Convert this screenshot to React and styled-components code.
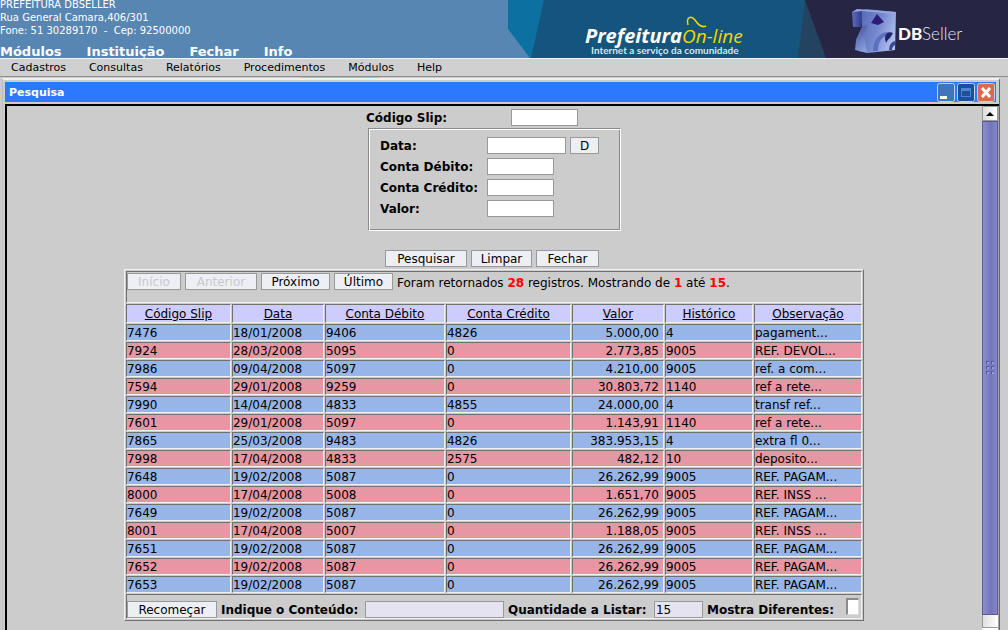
import React from "react";
import styled, { createGlobalStyle, css } from "styled-components";

const Global = createGlobalStyle`
  * { box-sizing: border-box; }
  body {
    margin: 0;
    background: #cccccc;
    color: #000;
    font: 12px/16px "DejaVu Sans", sans-serif;
  }
  button, input { font: inherit; color: inherit; margin: 0; border-radius: 0; }
`;

const Page = styled.div`
  height: 100vh;
  display: flex;
  flex-direction: column;
  overflow: hidden;
`;

const Header = styled.header`
  flex: none;
  height: 58px;
  display: flex;
  justify-content: space-between;
  background: #5786b2;
  color: #fff;
  overflow: hidden;
`;

const Identity = styled.div`
  display: flex;
  flex-direction: column;
  justify-content: space-between;
`;

const Address = styled.address`
  font: normal 10px/13px "DejaVu Sans", sans-serif;
  white-space: pre;
  margin-top: -2px;
`;

const MainNav = styled.nav`
  display: flex;
  gap: 25px;
  height: 14px;
  font-size: 13px;
  font-weight: bold;
  line-height: 16px;
  a { color: #fff; text-decoration: none; }
`;

const Banner = styled.svg`
  flex: none;
  width: 500px;
  height: 58px;
`;

const MenuBar = styled.nav`
  flex: none;
  position: relative;
  display: flex;
  gap: 23px;
  height: 19px;
  padding: 0 11px;
  font-size: 11px;
  line-height: 17px;
  background: #d0d0d0;
  border-top: 1px solid #f4f4f4;
  border-bottom: 1px solid #8e8e8e;
  a { color: #000; text-decoration: none; }
  &::after {
    content: "";
    position: absolute;
    left: 301px;
    bottom: -2px;
    width: 79px;
    height: 1px;
    background: #d9b27c;
  }
`;

const Window = styled.section`
  flex: 1;
  min-height: 0;
  margin: 1px 8px 0 2px;
  display: flex;
  flex-direction: column;
  border: 1px solid #666;
  border-top: 2px solid #f0f0f0;
  border-left-color: #c0c0c0;
  border-bottom: 0;
`;

const TitleBar = styled.div`
  flex: none;
  height: 20px;
  margin: 2px 3px 2px 2px;
  padding: 0 1px 0 4px;
  display: flex;
  align-items: center;
  gap: 1px;
  background: #2c79ff;
`;

const Title = styled.h1`
  flex: 1;
  margin: 0;
  padding-top: 2px;
  color: #fff;
  font-size: 11px;
  line-height: 18px;
`;

const WindowButton = styled.button`
  width: 19px;
  height: 19px;
  padding: 0;
  border: 0;
  background: none;
  svg { display: block; }
`;

const Frame = styled.div`
  flex: 1;
  min-height: 0;
  display: flex;
  margin: 0 0 0 2px;
  border-top: 2px solid #000;
  border-left: 2px solid #000;
`;

const Content = styled.main`
  flex: 1;
  min-width: 0;
  display: flex;
  flex-direction: column;
  align-items: center;
  padding-top: 3px;
  overflow: hidden;
`;

const ScrollBar = styled.div`
  flex: none;
  width: 17px;
  padding-right: 1px;
  background: #a4a4a4;
  display: flex;
  flex-direction: column;
`;

const ScrollArrow = styled.button`
  flex: none;
  height: 15px;
  padding: 0;
  border: 1px solid #999;
  background: linear-gradient(90deg, #dcdcdc, #fff);
  svg { display: block; margin: auto; }
`;

const ScrollThumb = styled.div`
  flex: 1;
  display: flex;
  align-items: center;
  justify-content: center;
  border: 1px solid #5c5c8c;
  background: linear-gradient(90deg, #8b8dd6, #7476b4 55%, #8386d0);
`;

const ScrollTrack = styled.div`
  flex: none;
  height: 12px;
  border-left: 1px solid #999;
  background: linear-gradient(90deg, #e0e0e0, #fff);
`;

const ScrollEnd = styled.div`
  flex: none;
  height: 3px;
  border-top: 1px solid #999;
  background: #fff;
`;

const Form = styled.form`
  display: flex;
  flex-direction: column;
  align-items: center;
`;

const Label = styled.label`
  padding-top: 2px;
  font-weight: bold;
  line-height: 15px;
  white-space: nowrap;
`;

const SlipRow = styled.div`
  width: 257px;
  display: grid;
  grid-template-columns: 145px auto;
  justify-content: start;
`;

const Field = styled.input`
  width: ${(p) => p.$width || 67}px;
  height: 17px;
  padding: 0 1px;
  border: 1px solid #999;
  background: ${(p) => (p.$tint ? "#e6e3f1" : "#fff")};
`;

const Button = styled.button`
  flex: none;
  width: ${(p) => p.$width}px;
  height: 17px;
  padding: 2px 0 0;
  border: 1px solid #999;
  background: #eeeff4;
  line-height: 13px;
  &:disabled { color: #c9c9cb; }
`;

const Criteria = styled.fieldset`
  width: 253px;
  height: 103px;
  margin: 2px 0 0;
  padding: 7px 10px;
  border: 1px solid #8a8a8a;
  border-right-color: #fff;
  border-bottom-color: #fff;
  box-shadow: inset 1px 1px #fff, inset -1px -1px #8a8a8a;
`;

const CriteriaGrid = styled.div`
  display: grid;
  grid-template-columns: 107px auto;
  justify-content: start;
  row-gap: 4px;
  padding: 1px;
`;

const Inline = styled.div`
  display: flex;
  gap: 4px;
`;

const Actions = styled(Inline)`
  margin: 19px 5px 2px 0;
`;

const sunken = css`
  border: 1px solid #707070;
  border-right-color: #f0f0f0;
  border-bottom-color: #f0f0f0;
`;

const Results = styled.table`
  width: 740px;
  margin-right: 1px;
  table-layout: fixed;
  border: 1px solid #f0f0f0;
  border-right-color: #707070;
  border-bottom-color: #707070;
  border-collapse: separate;
  border-spacing: 1px;
`;

const BarCell = styled.td`
  ${sunken}
  height: ${(p) => p.$height}px;
  padding: ${(p) => (p.$align === "top" ? 1 : 0)}px 0 0;
  vertical-align: ${(p) => p.$align};
  font-size: 12px;
  font-weight: normal;
`;

const Bar = styled(Inline)`
  align-items: ${(p) => p.$align};
  white-space: nowrap;
`;

const Summary = styled.span`
  line-height: 20px;
  strong { color: #f00; }
`;

const HeadCell = styled.th`
  ${sunken}
  height: 19px;
  padding: 2px 0 0;
  background: #ccccff;
  font-size: 12px;
  font-weight: normal;
  line-height: 15px;
  a { color: #000; }
`;

const Cell = styled.td`
  ${sunken}
  height: 17px;
  padding: 2px ${(p) => (p.$right ? 4 : 0)}px 0 0;
  font-size: 12px;
  line-height: 13px;
  text-align: ${(p) => (p.$right ? "right" : "left")};
  white-space: nowrap;
`;

const Row = styled.tr`
  ${Cell} { background: ${(p) => (p.$odd ? "#e796a4" : "#97b5e7")}; }
`;

const Pair = styled.div`
  display: grid;
  grid-template-columns: ${(p) => p.$label}px auto;
  align-items: end;
`;

const Check = styled.input`
  appearance: none;
  width: 13px;
  height: 17px;
  margin: 0 0 3px;
  background: #fff;
  border: 2px solid #8a8a8a;
  border-right: 1px solid #ddd;
  border-bottom: 1px solid #ddd;
`;

const columns = [
  ["Código Slip", 105],
  ["Data", 92],
  ["Conta Débito", 120],
  ["Conta Crédito", 125],
  ["Valor", 92],
  ["Histórico", 88],
  ["Observação", 108],
];

const rows = [
  ["7476", "18/01/2008", "9406", "4826", "5.000,00", "4", "pagament..."],
  ["7924", "28/03/2008", "5095", "0", "2.773,85", "9005", "REF. DEVOL..."],
  ["7986", "09/04/2008", "5097", "0", "4.210,00", "9005", "ref. a com..."],
  ["7594", "29/01/2008", "9259", "0", "30.803,72", "1140", "ref a rete..."],
  ["7990", "14/04/2008", "4833", "4855", "24.000,00", "4", "transf ref..."],
  ["7601", "29/01/2008", "5097", "0", "1.143,91", "1140", "ref a rete..."],
  ["7865", "25/03/2008", "9483", "4826", "383.953,15", "4", "extra fl 0..."],
  ["7998", "17/04/2008", "4833", "2575", "482,12", "10", "deposito..."],
  ["7648", "19/02/2008", "5087", "0", "26.262,99", "9005", "REF. PAGAM..."],
  ["8000", "17/04/2008", "5008", "0", "1.651,70", "9005", "REF. INSS ..."],
  ["7649", "19/02/2008", "5087", "0", "26.262,99", "9005", "REF. PAGAM..."],
  ["8001", "17/04/2008", "5007", "0", "1.188,05", "9005", "REF. INSS ..."],
  ["7651", "19/02/2008", "5087", "0", "26.262,99", "9005", "REF. PAGAM..."],
  ["7652", "19/02/2008", "5087", "0", "26.262,99", "9005", "REF. PAGAM..."],
  ["7653", "19/02/2008", "5087", "0", "26.262,99", "9005", "REF. PAGAM..."],
];

function BannerArt() {
  return (
    <Banner viewBox="0 0 500 58" role="img" aria-label="Prefeitura On-line, DBSeller">
      <defs>
        <linearGradient id="cube" x1="0" y1="0.3" x2="1" y2="0.7">
          <stop offset="0" stopColor="#5468b8" />
          <stop offset="0.5" stopColor="#7487cc" />
          <stop offset="1" stopColor="#b4c4f0" />
        </linearGradient>
        <linearGradient id="side" x1="0" x2="1">
          <stop offset="0" stopColor="#5f6cb8" />
          <stop offset="1" stopColor="#303c90" />
        </linearGradient>
        <linearGradient id="foot" x1="0" y1="0" x2="0.4" y2="1">
          <stop offset="0" stopColor="#3c4a9c" />
          <stop offset="1" stopColor="#8a9ddc" />
        </linearGradient>
      </defs>
      <path d="M0 0H500V58H22L0 29Z" fill="#0c70a1" />
      <path d="M36 0H500V58H23Z" fill="#14547d" />
      <path d="M297 0L290 58H330V0Z" fill="#244360" />
      <path d="M297 0H500V58H318Z" fill="#262543" />
      <g fontFamily="'Open Sans', sans-serif" fontStyle="italic">
        <text x="77" y="43" fontSize="20" fontWeight="bold" fill="#fff">Prefeitura</text>
        <text x="174" y="43" fontSize="19" fill="#f0d800">On-line</text>
      </g>
      <text x="83" y="54" fontSize="10" fontFamily="Lato, sans-serif" fontWeight="bold" fill="#d5e5f0">Internet a serviço da comunidade</text>
      <path d="M180 25C178 17 183 15 187 20C191 26 194 28 198 26" fill="none" stroke="#f0d800" strokeWidth="1.5" />
      <path d="M353 11L358 9L388 12L387 50L360 53L350 51L348 40L354 27Z" fill="url(#cube)" />
      <path d="M344 12L354 10L353 27L345 27Z" fill="url(#side)" />
      <path d="M354 27L360 25C356 33 356 44 360 53L347 50L348 40Z" fill="url(#foot)" />
      <path d="M344 12L349 9L388 12L386 14L354 11Z" fill="#97a6e0" />
      <path d="M369 14L376 22L370 25L363 23Z" fill="#2a1d78" />
      <path d="M365 51C365 41 371 32 380 32L378 36C372 38 370 44 370 51Z" fill="#5c6fc0" />
      <path d="M377 39C377 34 380 31 385 33L382 38C380 39 379 41 378 43Z" fill="#20256a" />
      <path d="M381 50C381 45 383 42 387 41V45C385 46 384 48 384 50Z" fill="#3c4c9c" />
      <text x="390" y="40" fontFamily="Lato, sans-serif" fontWeight="900" fontSize="17" fill="#fff">DB</text>
      <text x="414" y="40" fontFamily="Lato, sans-serif" fontWeight="300" fontSize="17" fill="#e4e4f0">Seller</text>
    </Banner>
  );
}

function WindowIcon({ kind }) {
  const fill = { min: "#3f76bb", max: "#1f4f9c", close: "#dc6a4e" }[kind];
  return (
    <svg width="19" height="19" viewBox="0 0 19 19" aria-hidden="true">
      <rect x="1.5" y="0.5" width="17" height="18" rx="2" fill={fill} stroke="#b9d0ee" />
      {kind === "min" && <rect x="4" y="13" width="7" height="3" fill="#fff" />}
      {kind === "max" && (
        <>
          <rect x="5.5" y="5.5" width="9" height="8" fill="none" stroke="#4f86d4" />
          <rect x="5" y="5" width="10" height="3" fill="#4f86d4" />
        </>
      )}
      {kind === "close" && <path d="M6 5L14 14M14 5L6 14" stroke="#fff" strokeWidth="3" />}
    </svg>
  );
}

function CriteriaField({ id, label, width, children }) {
  return (
    <>
      <Label htmlFor={id}>{label}</Label>
      <Inline>
        <Field id={id} $width={width} />
        {children}
      </Inline>
    </>
  );
}

export default function App() {
  return (
    <Page>
      <Global />
      <Header>
        <Identity>
          <Address>{"PREFEITURA DBSELLER\nRua General Camara,406/301\nFone: 51 30289170  -  Cep: 92500000"}</Address>
          <MainNav>
            {["Módulos", "Instituição", "Fechar", "Info"].map((t) => (
              <a href="#" key={t}>{t}</a>
            ))}
          </MainNav>
        </Identity>
        <BannerArt />
      </Header>
      <MenuBar>
        {["Cadastros", "Consultas", "Relatórios", "Procedimentos", "Módulos", "Help"].map((t) => (
          <a href="#" key={t}>{t}</a>
        ))}
      </MenuBar>
      <Window>
        <TitleBar>
          <Title>Pesquisa</Title>
          <WindowButton aria-label="Minimizar"><WindowIcon kind="min" /></WindowButton>
          <WindowButton aria-label="Maximizar"><WindowIcon kind="max" /></WindowButton>
          <WindowButton aria-label="Fechar janela"><WindowIcon kind="close" /></WindowButton>
        </TitleBar>
        <Frame>
          <Content>
            <Form onSubmit={(e) => e.preventDefault()}>
              <SlipRow>
                <Label htmlFor="slip">Código Slip:</Label>
                <Field id="slip" />
              </SlipRow>
              <Criteria>
                <CriteriaGrid>
                  <CriteriaField id="data" label="Data:" width={79}>
                    <Button type="button" $width={29}>D</Button>
                  </CriteriaField>
                  <CriteriaField id="debito" label="Conta Débito:" />
                  <CriteriaField id="credito" label="Conta Crédito:" />
                  <CriteriaField id="valor" label="Valor:" />
                </CriteriaGrid>
              </Criteria>
              <Actions>
                <Button $width={82}>Pesquisar</Button>
                <Button type="reset" $width={61}>Limpar</Button>
                <Button type="button" $width={63}>Fechar</Button>
              </Actions>
            </Form>
            <Results>
              <colgroup>
                {columns.map(([name, width]) => (
                  <col key={name} width={width} />
                ))}
              </colgroup>
              <thead>
                <tr>
                  <BarCell colSpan={7} $height={32} $align="top">
                    <Bar $align="flex-start">
                      <Button disabled $width={54}>Início</Button>
                      <Button disabled $width={72}>Anterior</Button>
                      <Button $width={69}>Próximo</Button>
                      <Button $width={59}>Último</Button>
                      <Summary>
                        Foram retornados <strong>28</strong> registros. Mostrando de <strong>1</strong> até <strong>15</strong>.
                      </Summary>
                    </Bar>
                  </BarCell>
                </tr>
                <tr>
                  {columns.map(([name]) => (
                    <HeadCell key={name}><a href="#">{name}</a></HeadCell>
                  ))}
                </tr>
              </thead>
              <tbody>
                {rows.map((row, i) => (
                  <Row key={row[0]} $odd={i % 2 === 1}>
                    {row.map((value, c) => (
                      <Cell key={c} $right={c === 4}>{value}</Cell>
                    ))}
                  </Row>
                ))}
              </tbody>
              <tfoot>
                <tr>
                  <BarCell colSpan={7} $height={25} $align="bottom">
                    <Bar $align="flex-end">
                      <Button $width={90}>Recomeçar</Button>
                      <Pair $label={144}>
                        <Label htmlFor="conteudo">Indique o Conteúdo:</Label>
                        <Field id="conteudo" $width={139} $tint />
                      </Pair>
                      <Pair $label={146}>
                        <Label htmlFor="quantidade">Quantidade a Listar:</Label>
                        <Field id="quantidade" $width={49} $tint defaultValue="15" />
                      </Pair>
                      <Pair $label={139}>
                        <Label htmlFor="diferentes">Mostra Diferentes:</Label>
                        <Check id="diferentes" type="checkbox" />
                      </Pair>
                    </Bar>
                  </BarCell>
                </tr>
              </tfoot>
            </Results>
          </Content>
          <ScrollBar>
            <ScrollArrow aria-label="Rolar para cima">
              <svg width="8" height="4" aria-hidden="true"><path d="M0 4L4 0L8 4Z" /></svg>
            </ScrollArrow>
            <ScrollThumb>
              <svg width="8" height="14" aria-hidden="true">
                {[0, 5, 10].map((y) => [0, 5].map((x) => (
                  <g key={`${x}-${y}`}>
                    <rect x={x} y={y} width="3" height="3" fill="#5658a0" />
                    <rect x={x + 1} y={y + 1} width="2" height="2" fill="#9a9ce0" />
                  </g>
                )))}
              </svg>
            </ScrollThumb>
            <ScrollTrack />
            <ScrollEnd />
          </ScrollBar>
        </Frame>
      </Window>
    </Page>
  );
}
